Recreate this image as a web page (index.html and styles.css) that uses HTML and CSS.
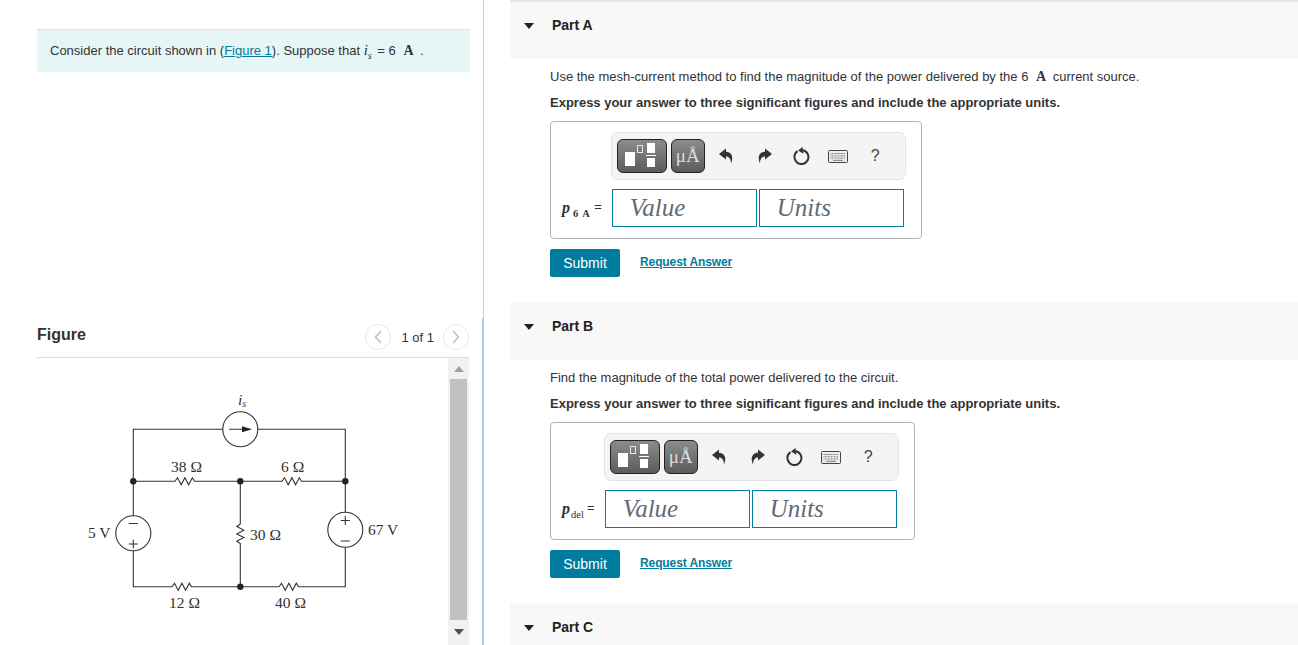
FILE: index.html
```html
<!DOCTYPE html>
<html lang="en">

<head>
    <meta charset="UTF-8">
    <title>Mesh-current problem</title>
    <link rel="stylesheet" href="styles.css">
</head>

<body>
    <svg class="icon-defs" aria-hidden="true">
        <symbol id="icon-undo" viewBox="0 0 16 16">
            <path d="M8 0.500 L1 6 L8 11.500 V8.500 C11 8.500 12.800 10.500 13 15.500 C16 9 13.500 3.800 8 3.800 Z" />
        </symbol>
        <symbol id="icon-redo" viewBox="0 0 16 16">
            <path d="M8 0.500 L15 6 L8 11.500 V8.500 C5 8.500 3.200 10.500 3 15.500 C0 9 2.500 3.800 8 3.800 Z" />
        </symbol>
        <symbol id="icon-reset" viewBox="0 0 18 18">
            <path class="reset-arc" d="M5.500 4.200 A7 7 0 1 0 11 3.200" />
            <path d="M10.500 0 L6 3.600 L11.500 6.800 Z" />
        </symbol>
        <symbol id="icon-keys" viewBox="0 0 20 13">
            <rect class="keys-frame" x="0.500" y="0.500" width="19" height="12" rx="1" />
            <path class="keys-row" d="M2.500 3.500 H17.500 M2.500 5.800 H17.500 M2.500 8 H17.500" />
            <path class="keys-bar" d="M5 10.300 H15" />
        </symbol>
        <symbol id="icon-matrix" viewBox="0 0 48 32">
            <rect class="white" x="7" y="12" width="10" height="14" />
            <rect class="outline" x="19.500" y="5.500" width="5" height="7" />
            <rect class="white" x="29" y="3" width="8" height="10" />
            <rect class="white" x="28" y="15" width="10" height="1" />
            <rect class="white" x="29" y="18" width="8" height="9" />
        </symbol>
    </svg>

    <div class="page">
        <div class="left">
            <div class="intro">
                Consider the circuit shown in (<a href="#">Figure 1</a>). Suppose that
                <span class="math-i">i<sub>s</sub></span> = 6 <span class="math-a">A</span> .
            </div>

            <div class="figure-head">
                <h2>Figure</h2>
                <div class="pager">
                    <span class="pager-btn">
                        <svg width="8" height="14" viewBox="0 0 8 14"><path d="M7 1 L1.500 7 L7 13" /></svg>
                    </span>
                    <span class="pager-text">1 of 1</span>
                    <span class="pager-btn">
                        <svg width="8" height="14" viewBox="0 0 8 14"><path d="M1 1 L6.500 7 L1 13" /></svg>
                    </span>
                </div>
            </div>

            <div class="figure-body">
                <!-- viewBox uses page coordinates so the wires are easy to check -->
                <svg class="circuit" width="411" height="287" viewBox="37 358 411 287">
                    <g class="wire">
                        <path d="M133.300 481.300 V429.300 H222.800 M257.800 429.300 H345.300 V512.200" />
                        <path d="M133.300 481.300 H175 l2.500 -3.500 l3.700 7 l3.700 -7 l3.700 7 l3.700 -7 l2.200 3.500 H282 l2.500 -3.500 l3.700 7 l3.700 -7 l3.700 7 l3.700 -7 l2.200 3.500 H345.300" />
                        <path d="M133.300 481.300 V515.800 M133.300 550.800 V586.700 H172 l2.500 -3.500 l3.700 7 l3.700 -7 l3.700 7 l3.700 -7 l2.200 3.500 H279 l2.500 -3.500 l3.700 7 l3.700 -7 l3.700 7 l3.700 -7 l2.200 3.500 H345.300 V547.200" />
                        <path d="M240.300 481.300 V524 l-3.500 2.500 l7 3.700 l-7 3.700 l7 3.700 l-7 3.700 l3.500 2.200 V586.700" />
                        <circle cx="240.300" cy="429.300" r="17.500" />
                        <circle cx="133.300" cy="533.300" r="17.500" />
                        <circle cx="345.300" cy="529.700" r="17.500" />
                        <path d="M229 429.300 H246 M128.800 523.500 H137.800 M128.800 544 H137.800 M133.300 539.500 V548.500 M345.300 516 V525 M340.800 520.500 H349.800 M340.800 541 H349.800" />
                    </g>
                    <path class="solid" d="M242 426.300 L252 429.300 L242 432.300 Z" />
                    <g class="solid">
                        <circle cx="133.300" cy="481.300" r="3.200" />
                        <circle cx="240.300" cy="481.300" r="3.200" />
                        <circle cx="345.300" cy="481.300" r="3.200" />
                        <circle cx="240.300" cy="586.700" r="3.200" />
                    </g>
                    <g class="labels">
                        <text class="label-i" x="238" y="405">i<tspan class="label-sub" dy="2">s</tspan></text>
                        <text x="171" y="472">38 Ω</text>
                        <text x="281" y="472">6 Ω</text>
                        <text x="250" y="540">30 Ω</text>
                        <text x="88" y="538">5 V</text>
                        <text x="368" y="535">67 V</text>
                        <text x="169" y="608">12 Ω</text>
                        <text x="275" y="608">40 Ω</text>
                    </g>
                </svg>
                <div class="scrollbar">
                    <span class="arrow-up"></span>
                    <span class="thumb"></span>
                    <span class="arrow-down"></span>
                </div>
            </div>
        </div>

        <div class="right">
            <section class="part part-first">
                <div class="part-head"><span class="caret"></span><h3>Part A</h3></div>
                <div class="part-body">
                    <p>Use the mesh-current method to find the magnitude of the power delivered by the 6 <span class="math-a">A</span> current source.</p>
                    <p class="bold">Express your answer to three significant figures and include the appropriate units.</p>
                    <div class="answer-box">
                        <div class="toolbar">
                            <span class="tool-btn tool-matrix"><svg width="48" height="32"><use href="#icon-matrix" /></svg></span>
                            <span class="tool-btn tool-unit">μÅ</span>
                            <svg class="tool-icon undo" width="16" height="16"><use href="#icon-undo" /></svg>
                            <svg class="tool-icon redo" width="16" height="16"><use href="#icon-redo" /></svg>
                            <svg class="tool-icon reset" width="18" height="18"><use href="#icon-reset" /></svg>
                            <svg class="tool-icon keys" width="20" height="13"><use href="#icon-keys" /></svg>
                            <span class="tool-help">?</span>
                        </div>
                        <div class="answer-label label-wide"><i>p</i><sub>6 A</sub> <span>=</span></div>
                        <div class="answer-inputs">
                            <div class="field">Value</div>
                            <div class="field">Units</div>
                        </div>
                    </div>
                    <div class="actions">
                        <button class="submit">Submit</button>
                        <a class="request" href="#">Request Answer</a>
                    </div>
                </div>
            </section>

            <section class="part">
                <div class="part-head"><span class="caret"></span><h3>Part B</h3></div>
                <div class="part-body">
                    <p>Find the magnitude of the total power delivered to the circuit.</p>
                    <p class="bold">Express your answer to three significant figures and include the appropriate units.</p>
                    <div class="answer-box">
                        <div class="toolbar">
                            <span class="tool-btn tool-matrix"><svg width="48" height="32"><use href="#icon-matrix" /></svg></span>
                            <span class="tool-btn tool-unit">μÅ</span>
                            <svg class="tool-icon undo" width="16" height="16"><use href="#icon-undo" /></svg>
                            <svg class="tool-icon redo" width="16" height="16"><use href="#icon-redo" /></svg>
                            <svg class="tool-icon reset" width="18" height="18"><use href="#icon-reset" /></svg>
                            <svg class="tool-icon keys" width="20" height="13"><use href="#icon-keys" /></svg>
                            <span class="tool-help">?</span>
                        </div>
                        <div class="answer-label"><i>p</i><sub>del</sub> <span>=</span></div>
                        <div class="answer-inputs">
                            <div class="field">Value</div>
                            <div class="field">Units</div>
                        </div>
                    </div>
                    <div class="actions">
                        <button class="submit">Submit</button>
                        <a class="request" href="#">Request Answer</a>
                    </div>
                </div>
            </section>

            <section class="part">
                <div class="part-head"><span class="caret"></span><h3>Part C</h3></div>
            </section>
        </div>
    </div>
</body>

</html>
```

FILE: styles.css
```css
body {
    margin: 0;
    height: 645px;
    overflow: hidden;
    background: #ffffff;
    color: #333333;
    font-family: "Liberation Sans", Arial, sans-serif;
    font-size: 13px;
}

.icon-defs {
    display: none;
}

.page {
    display: flex;
    height: 645px;
    overflow: hidden;
}

/* left column */
.left {
    position: relative;
    width: 483px;
    box-sizing: border-box;
    flex-shrink: 0;
    padding: 29px 13px 0 37px;
}

/* the darker piece of the divider, beside the figure */
.left::after {
    content: "";
    position: absolute;
    top: 318px;
    right: -1px;
    bottom: 0;
    width: 2px;
    background: #b8cade;
}

.intro {
    height: 43px;
    box-sizing: border-box;
    padding: 11px 13px 0;
    background: #e6f5f6;
    border-top: 1px solid #d9e2e6;
    line-height: 18px;
}

.intro a {
    color: #007c9e;
}

.math-i {
    margin-right: 2px;
    font-family: "Liberation Serif", serif;
    font-style: italic;
    font-size: 15px;
}

.math-i sub {
    font-size: 10px;
    line-height: 0;
}

.math-a {
    font-family: "Liberation Serif", serif;
    font-weight: bold;
    font-size: 14px;
    margin: 0 3px 0 4px;
}

.figure-head {
    display: flex;
    justify-content: space-between;
    align-items: flex-start;
    height: 38px;
    margin-top: 247px;
    border-bottom: 1px solid #dddddd;
    margin-right: 1px;
}

.figure-head h2 {
    margin: 0;
    padding-top: 7px;
    font-size: 16px;
    line-height: 18px;
    font-weight: bold;
    color: #333333;
}

.pager {
    display: flex;
    align-items: center;
    padding-top: 5px;
}

.pager-text {
    margin: 0 9px 0 10px;
    font-size: 13px;
}

.pager-btn {
    display: flex;
    align-items: center;
    justify-content: center;
    width: 24px;
    height: 24px;
    border: 1px solid #e6e6e6;
    border-radius: 50%;
}

.pager-btn path {
    fill: none;
    stroke: #b4c0cc;
    stroke-width: 1.6;
}

.figure-body {
    display: flex;
    height: 287px;
    margin-right: 1px;
}

.circuit {
    display: block;
}

.wire {
    fill: none;
    stroke: #333333;
    stroke-width: 1.1;
}

.solid {
    fill: #222222;
}

.labels {
    fill: #333333;
    font-family: "Liberation Serif", serif;
    font-size: 15.500px;
}

.label-i {
    font-style: italic;
}

.label-sub {
    font-size: 10px;
}

.scrollbar {
    display: flex;
    flex-direction: column;
    align-items: center;
    width: 21px;
    height: 287px;
    background: #f1f1f1;
}

.thumb {
    width: 17px;
    height: 241px;
    background: #c1c1c1;
}

.arrow-up,
.arrow-down {
    width: 0;
    height: 0;
    border-left: 5px solid transparent;
    border-right: 5px solid transparent;
}

.arrow-up {
    margin: 8px 0 7px;
    border-bottom: 6px solid #a3a3a3;
}

.arrow-down {
    margin-top: 9px;
    border-top: 6px solid #505050;
}

/* right column */
.right {
    flex: 1;
    padding-left: 26px;
    border-left: 1px solid #c8d0d8;
}

.part-first {
    border-top: 2px solid #e5e5e5;
}

.part-head {
    display: flex;
    align-items: flex-start;
    height: 57px;
    box-sizing: border-box;
    padding: 15px 0 0 14px;
    background: #f8f8f8;
}

.part-head h3 {
    margin: 0 0 0 18px;
    font-size: 14px;
    line-height: 17px;
    color: #222222;
}

.caret {
    width: 0;
    height: 0;
    margin-top: 6px;
    border-left: 5.500px solid transparent;
    border-right: 5.500px solid transparent;
    border-top: 6px solid #222222;
}

.part-body {
    padding: 9px 0 26px 40px;
}

.part-body p {
    margin: 0 0 8px;
    line-height: 18px;
}

.part-body p.bold {
    margin-bottom: 9px;
    font-weight: bold;
}

.answer-box {
    display: inline-grid;
    grid-template-columns: auto auto;
    column-gap: 9px;
    row-gap: 9px;
    align-items: center;
    box-sizing: border-box;
    height: 118px;
    padding: 10px 15px 11px 11px;
    border: 1px solid #b3b3b3;
    border-radius: 4px;
    vertical-align: top;
}

.toolbar {
    grid-column: 2;
    display: flex;
    align-items: center;
    width: 295px;
    height: 48px;
    box-sizing: border-box;
    padding-left: 5px;
    background: #f4f4f4;
    border: 1px solid #e3e3e3;
    border-radius: 7px;
}

.tool-btn {
    display: flex;
    align-items: center;
    justify-content: center;
    box-sizing: border-box;
    height: 34px;
    border: 1px solid #222222;
    border-radius: 6px;
    background: linear-gradient(#8c8c8c, #5c5c5c);
}

.tool-matrix {
    width: 50px;
}

.tool-unit {
    width: 34px;
    margin-left: 4px;
    color: #dddddd;
    font-family: "Liberation Serif", serif;
    font-size: 19px;
}

.white {
    fill: #ffffff;
}

.outline {
    fill: none;
    stroke: #e8e8e8;
}

.tool-icon {
    flex-shrink: 0;
    fill: #333333;
}

.undo {
    margin-left: 13px;
}

.redo {
    margin-left: 23px;
}

.reset {
    margin-left: 19px;
}

.reset-arc {
    fill: none;
    stroke: #333333;
    stroke-width: 2;
}

.keys {
    margin-left: 18px;
}

.keys-frame {
    fill: #eeeeee;
    stroke: #444444;
}

.keys-row {
    fill: none;
    stroke: #777777;
    stroke-dasharray: 1 0.500;
}

.keys-bar {
    stroke: #777777;
}

.tool-help {
    margin-left: 23px;
    font-size: 16px;
    color: #444444;
}

.answer-label {
    font-family: "Liberation Serif", serif;
    white-space: nowrap;
    color: #333333;
}

.answer-label i {
    font-size: 16px;
    font-weight: bold;
}

.answer-label sub {
    font-size: 10.500px;
    line-height: 0;
    margin-left: 1px;
}

.label-wide sub {
    font-weight: bold;
    word-spacing: 2px;
    margin: 0 1px 0 3px;
}

.answer-label span {
    font-family: "Liberation Sans", sans-serif;
    vertical-align: 2px;
    font-size: 13px;
}

.answer-inputs {
    display: flex;
    gap: 2px;
    margin-left: 1px;
}

.field {
    width: 145px;
    height: 38px;
    box-sizing: border-box;
    padding-left: 17px;
    border: 1px solid #007c9e;
    color: #5f6b76;
    font-family: "Liberation Serif", serif;
    font-style: italic;
    font-size: 25px;
    line-height: 35px;
}

.actions {
    display: flex;
    align-items: center;
    margin-top: 10px;
}

.submit {
    width: 70px;
    height: 28px;
    padding: 0;
    border: 0;
    border-radius: 2px;
    background: #007c9e;
    color: #ffffff;
    font-family: "Liberation Sans", sans-serif;
    font-size: 14px;
}

.request {
    margin: 0 0 2px 20px;
    color: #007c9e;
    font-size: 12px;
    font-weight: bold;
    letter-spacing: -0.100px;
}
```
